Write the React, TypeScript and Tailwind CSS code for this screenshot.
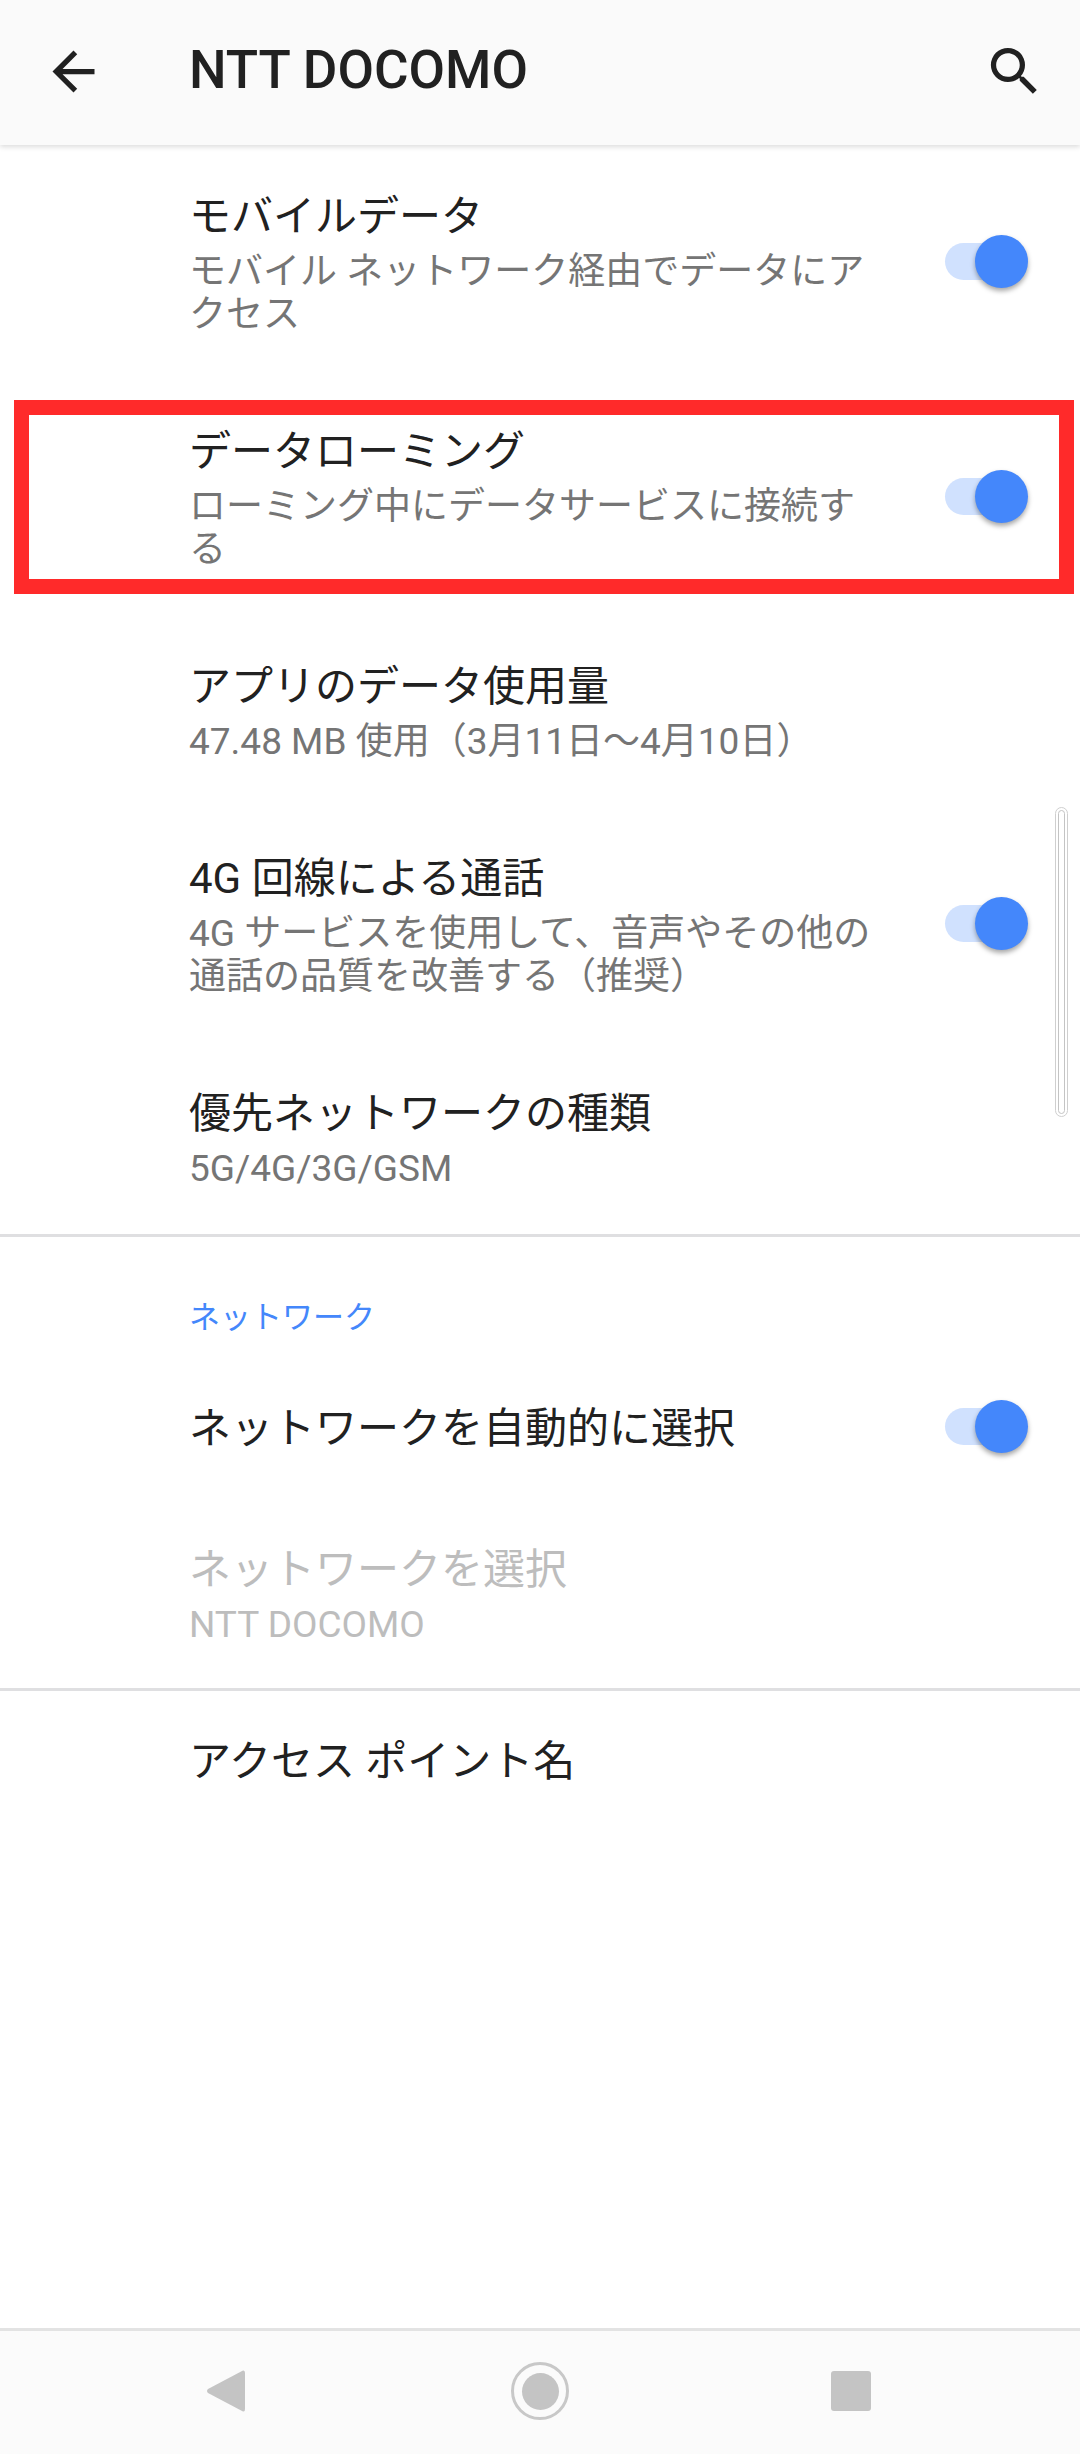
const FONT = "font-['Roboto','Noto_Sans_CJK_JP',sans-serif]";

function Toggle({ className }: { className?: string }) {
  return (
    <div className={"relative w-[84px] h-[53px] shrink-0 " + (className ?? "")}>
      <div className="absolute left-0 top-[8px] w-[70px] h-[37px] rounded-full bg-[#d0e1fe]" />
      <div className="absolute left-[30px] top-0 w-[53px] h-[53px] rounded-full bg-[#4487fb] shadow-[0_3px_5px_rgba(0,0,0,0.35)]" />
    </div>
  );
}

interface RowProps {
  title: string;
  summary?: string;
  toggle?: boolean;
  disabled?: boolean;
  className?: string;
}

function Row({ title, summary, toggle, disabled, className }: RowProps) {
  return (
    <div className={"flex items-center pl-[189px] pr-[51px] " + (className ?? "")}>
      <div className="flex-1 min-w-0">
        <p className={"text-[42px] leading-[60px] " + (disabled ? "text-[#bdbdbd]" : "text-[#212121]")}>
          {title}
        </p>
        {summary && (
          <p className={"mt-[3px] w-[690px] text-[37px] leading-[43px] " + (disabled ? "text-[#bdbdbd]" : "text-[#757575]")}>
            {summary}
          </p>
        )}
      </div>
      {toggle && <Toggle className={summary ? "" : "-mt-[6px]"} />}
    </div>
  );
}

export default function App() {
  return (
    <div className={"relative flex flex-col h-[2454px] w-[1080px] overflow-hidden bg-white " + FONT}>
      {/* Toolbar */}
      <header className="relative z-10 flex items-center h-[145px] shrink-0 pl-[42px] pr-[34px] pb-[3px] bg-[#fafafa] shadow-[0_2px_5px_rgba(0,0,0,0.14)]">
        <svg viewBox="0 0 24 24" className="w-[63px] h-[63px] shrink-0" fill="#212121">
          <path d="M20 11H7.83l5.59-5.59L12 4l-8 8 8 8 1.41-1.41L7.83 13H20v-2z" />
        </svg>
        <h1 className="ml-[84px] flex-1 text-[53px] font-medium text-[#212121]">NTT DOCOMO</h1>
        <svg viewBox="0 0 24 24" className="w-[63px] h-[63px] shrink-0" fill="#212121">
          <path d="M15.5 14h-.79l-.28-.27A6.471 6.471 0 0 0 16 9.5 6.5 6.5 0 1 0 9.5 16c1.61 0 3.09-.59 4.23-1.57l.27.28v.79l5 4.99L20.49 19l-4.99-5zm-6 0C7.01 14 5 11.99 5 9.5S7.01 5 9.5 5 14 7.01 14 9.5 11.99 14 9.5 14z" />
        </svg>
      </header>

      {/* Settings list */}
      <main className="flex-1 flex flex-col">
        <Row className="pt-[42px] pb-[43px]" title="モバイルデータ" summary="モバイル ネットワーク経由でデータにアクセス" toggle />
        <Row className="py-[43px]" title="データローミング" summary="ローミング中にデータサービスに接続する" toggle />
        <Row className="py-[43px]" title="アプリのデータ使用量" summary="47.48 MB 使用（3月11日～4月10日）" />
        <Row className="py-[43px]" title="4G 回線による通話" summary="4G サービスを使用して、音声やその他の通話の品質を改善する（推奨）" toggle />
        <Row className="pt-[43px] pb-[44px]" title="優先ネットワークの種類" summary="5G/4G/3G/GSM" />
        <div className="h-[3px] bg-[#dfdfe1]" />

        <p className="pl-[189px] pt-[64px] text-[31px] leading-[34px] text-[#4487fb]">ネットワーク</p>

        <Row className="pt-[64px] pb-[41px]" title="ネットワークを自動的に選択" toggle />
        <Row className="pt-[40px] pb-[42px]" title="ネットワークを選択" summary="NTT DOCOMO" disabled />
        <div className="h-[3px] bg-[#dfdfe1]" />

        <Row className="pt-[41px]" title="アクセス ポイント名" />
      </main>

      {/* Navigation bar */}
      <nav className="h-[126px] shrink-0 border-t-[3px] border-[#e3e3e3] bg-[#fbfbfb] flex items-center pl-[207px] pb-[3px]">
        <svg viewBox="0 0 38 42" className="w-[38px] h-[42px] shrink-0" fill="#c4c4c4">
          <path d="M36 0.5 Q38 0 38 3 V39 Q38 42 36 41.5 L1 23 Q-1 21 1 19 Z" />
        </svg>
        <div className="ml-[266px] w-[58px] h-[58px] shrink-0 rounded-full border-[3px] border-[#c8c8c8] flex items-center justify-center">
          <div className="w-[37px] h-[37px] rounded-full bg-[#c4c4c4]" />
        </div>
        <div className="ml-[262px] w-[40px] h-[40px] shrink-0 rounded-[3px] bg-[#c4c4c4]" />
      </nav>

      {/* Scrollbar */}
      <div className="absolute left-[1055px] top-[807px] w-[13px] h-[310px] rounded-full border border-[#cfcfcf] p-[2px]">
        <div className="w-full h-full rounded-full border border-[#c4c4c4]" />
      </div>

      {/* Red highlight frame */}
      <div className="absolute left-[14px] top-[400px] w-[1060px] h-[194px] border-[15px] border-[#ff2a2a]" />
    </div>
  );
}
